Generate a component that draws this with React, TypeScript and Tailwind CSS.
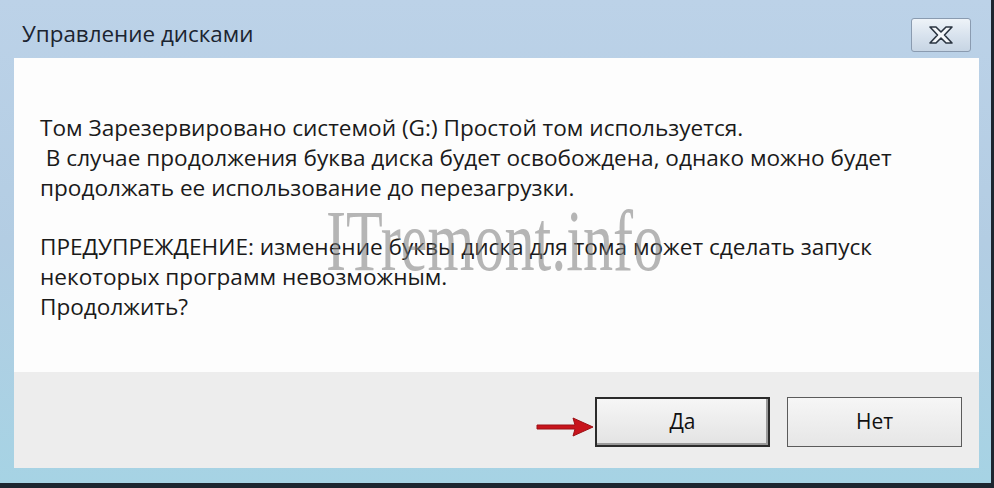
import React from "react";

const uiFont = { fontFamily: '"Open Sans", "Noto Sans", "DejaVu Sans", sans-serif' };

function CloseGlyph() {
  return (
    <svg width="30" height="20" viewBox="0 0 30 20">
      <path
        d="M4 2 H10 L15 7 L20 2 H26 L18.5 10 L26 18 H20 L15 13 L10 18 H4 L11.5 10 Z"
        fill="#f4f7fa"
        stroke="#2a3440"
        strokeWidth="1.6"
        strokeLinejoin="round"
      />
    </svg>
  );
}

function RedArrow() {
  return (
    <svg width="60" height="22" viewBox="0 0 60 22">
      <path
        d="M2 9 H40 L38 2 L58 11 L38 20 L40 13 H2 Z"
        fill="#c8141c"
        stroke="#9c0f15"
        strokeWidth="1"
        strokeLinejoin="round"
      />
    </svg>
  );
}

export default function App() {
  return (
    <div
      className="w-[994px] h-[488px] overflow-hidden bg-gradient-to-b from-[#bcd2e8] via-[#b3cde3] to-[#a6d3e4] border-r-[3px] border-b-[5px] border-[#1d2630] flex flex-col"
      style={uiFont}
    >
      {/* TITLE BAR */}
      <div className="h-[58px] flex items-start justify-between pl-[22px] pr-[20px]">
        <h1 className="mt-[20px] text-[22.4px] leading-[28px] text-[#1b2430]">
          Управление дисками
        </h1>

        <div className="mt-[18px] w-[60px] h-[34px] rounded-[3px] border border-[#8a9bb0] bg-gradient-to-b from-[#eef3f8] via-[#d9e3ee] to-[#c7d5e4] flex items-center justify-center">
          <CloseGlyph />
        </div>
      </div>

      {/* BODY */}
      <div className="ml-[14px] mr-[12px] flex-1 flex flex-col">
        <div className="relative h-[314px] bg-[#fdfdfd] pl-[26px] pt-[55px] text-[22.6px] leading-[30px] text-[#1a1a1a] whitespace-nowrap">
          <p>Том Зарезервировано системой (G:) Простой том используется.</p>
          <p>&nbsp;В случае продолжения буква диска будет освобождена, однако можно будет</p>
          <p>продолжать ее использование до перезагрузки.</p>
          <p className="mt-[29px]">
            ПРЕДУПРЕЖДЕНИЕ: изменение буквы диска для тома может сделать запуск
          </p>
          <p>некоторых программ невозможным.</p>
          <p>Продолжить?</p>

          {/* watermark */}
          <div
            className="absolute left-[312px] top-[140px] text-[86px] leading-none text-[#7a7a7a]/55 scale-x-[0.7] origin-left whitespace-nowrap"
            style={{ fontFamily: '"Liberation Serif", "DejaVu Serif", serif' }}
          >
            ITremont.info
          </div>
        </div>

        <div className="h-[96px] bg-[#ededed] flex items-start justify-end pt-[25px] pr-[17px] gap-[17px]">
          <div className="relative">
            <div className="absolute -left-[60px] top-[19px]">
              <RedArrow />
            </div>
            <button className="w-[175px] h-[50px] border-2 border-[#2b2b2b] bg-gradient-to-b from-[#f6f6f6] to-[#e3e3e3] shadow-[inset_-2px_-2px_0_#9a9a9a] text-[21px] text-[#111]">
              Да
            </button>
          </div>
          <button className="w-[175px] h-[50px] border border-[#5b5b5b] bg-gradient-to-b from-[#f6f6f6] to-[#e6e6e6] text-[21px] text-[#111]">
            Нет
          </button>
        </div>
      </div>

      <div className="h-[15px]" />
    </div>
  );
}
